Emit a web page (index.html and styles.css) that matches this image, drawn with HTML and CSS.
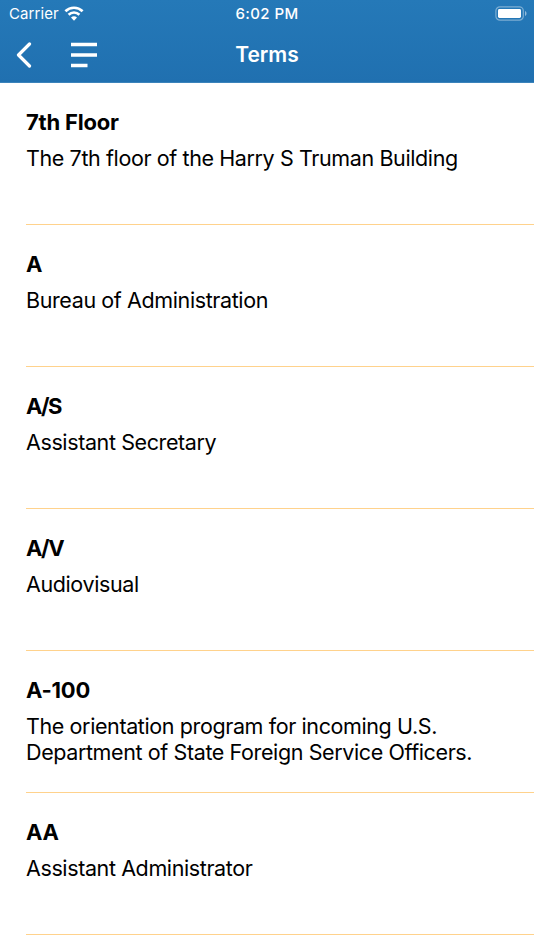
FILE: index.html
```html
<!DOCTYPE html>
<html lang="en">
<head>
    <meta charset="UTF-8">
    <meta name="viewport" content="width=device-width, initial-scale=1.0">
    <title>Terms</title>
    <link rel="stylesheet" href="styles.css">
</head>
<body>
    <header class="header">
        <div class="status-bar">
            <div class="carrier">
                <span>Carrier</span>
                <svg class="wifi" viewBox="0 0 20 15" width="20" height="15">
                    <path d="M1.4 5.2a12.4 12.4 0 0 1 17.2 0" fill="none" stroke="#fff" stroke-width="2.7"/>
                    <path d="M4.6 8.7a7.8 7.8 0 0 1 10.8 0" fill="none" stroke="#fff" stroke-width="2.6"/>
                    <path d="M10 14.8l-3-3.2a4.3 4.3 0 0 1 6 0z" fill="#fff"/>
                </svg>
            </div>
            <div class="time">6:02 PM</div>
            <div class="power">
                <svg viewBox="0 0 32 15" width="32" height="15">
                    <rect x="0.9" y="0.8" width="27.4" height="13.4" rx="4" fill="none" stroke="#fff" stroke-opacity="0.4" stroke-width="1.2"/>
                    <rect x="3" y="3" width="23" height="9" rx="1.4" fill="#fff"/>
                    <path d="M30 5c2 .8 2 4.2 0 5z" fill="#fff" fill-opacity="0.5"/>
                </svg>
            </div>
        </div>
        <nav class="nav-bar">
            <div class="nav-buttons">
                <svg class="back" viewBox="0 0 16 26" width="16" height="26">
                    <path d="M13.5 2L2.5 13l11 11" fill="none" stroke="#fff" stroke-width="3.2" stroke-linecap="round" stroke-linejoin="round"/>
                </svg>
                <svg class="menu" viewBox="0 0 26 26" width="26" height="26">
                    <path d="M0 2.5h26M0 13h26M0 23.5h16.5" fill="none" stroke="#fff" stroke-width="3.6"/>
                </svg>
            </div>
            <h1>Terms</h1>
        </nav>
    </header>

    <main class="terms">
        <div class="term">
            <h2>7th Floor</h2>
            <p>The 7th floor of the Harry S Truman Building</p>
        </div>
        <div class="term">
            <h2>A</h2>
            <p>Bureau of Administration</p>
        </div>
        <div class="term">
            <h2 class="tight">A/S</h2>
            <p>Assistant Secretary</p>
        </div>
        <div class="term">
            <h2 class="tight">A/V</h2>
            <p>Audiovisual</p>
        </div>
        <div class="term">
            <h2>A-100</h2>
            <p>The orientation program for incoming U.S. Department of State Foreign Service Officers.</p>
        </div>
        <div class="term">
            <h2>AA</h2>
            <p>Assistant Administrator</p>
        </div>
    </main>
</body>
</html>
```

FILE: styles.css
```css
* {
    box-sizing: border-box;
}

body {
    margin: 0;
    background: #fff;
    color: #000;
    font-family: Inter, "Liberation Sans", sans-serif;
}

h1, h2, p {
    margin: 0;
}

svg {
    display: block;
}

.header {
    height: 83px;
    background: linear-gradient(#2579b8, #2070b0);
    border-bottom: 1px solid #3b83bb;
    color: #fff;
}

.status-bar {
    display: grid;
    grid-template-columns: 1fr auto 1fr;
    height: 27px;
    padding: 0 8px;
    align-items: center;
    font-size: 15px;
}

.carrier {
    display: flex;
    align-items: center;
    gap: 5px;
    padding-left: 1px;
    letter-spacing: 0.1px;
}

.time {
    font-weight: 500;
    letter-spacing: 0.4px;
}

.power {
    display: flex;
    justify-content: flex-end;
    margin-right: -1px;
}

.nav-bar {
    display: grid;
    grid-template-columns: 1fr auto 1fr;
    height: 55px;
    padding: 0 16px;
    align-items: center;
}

.nav-buttons {
    display: flex;
    align-items: center;
    gap: 39px;
}

h1 {
    font-size: 21px;
    font-weight: 600;
}

.terms {
    padding-left: 26px;
}

.term {
    height: 142px;
    padding: 26px 50px 0 0;
    border-bottom: 1px solid #ffd28c;
}

.term h2 {
    font-size: 22px;
    font-weight: 700;
    letter-spacing: -0.2px;
    line-height: 26px;
}

.term h2.tight {
    letter-spacing: -1.6px;
}

.term p {
    margin-top: 10px;
    font-size: 21.5px;
    letter-spacing: -0.39px;
    line-height: 26px;
}
```
